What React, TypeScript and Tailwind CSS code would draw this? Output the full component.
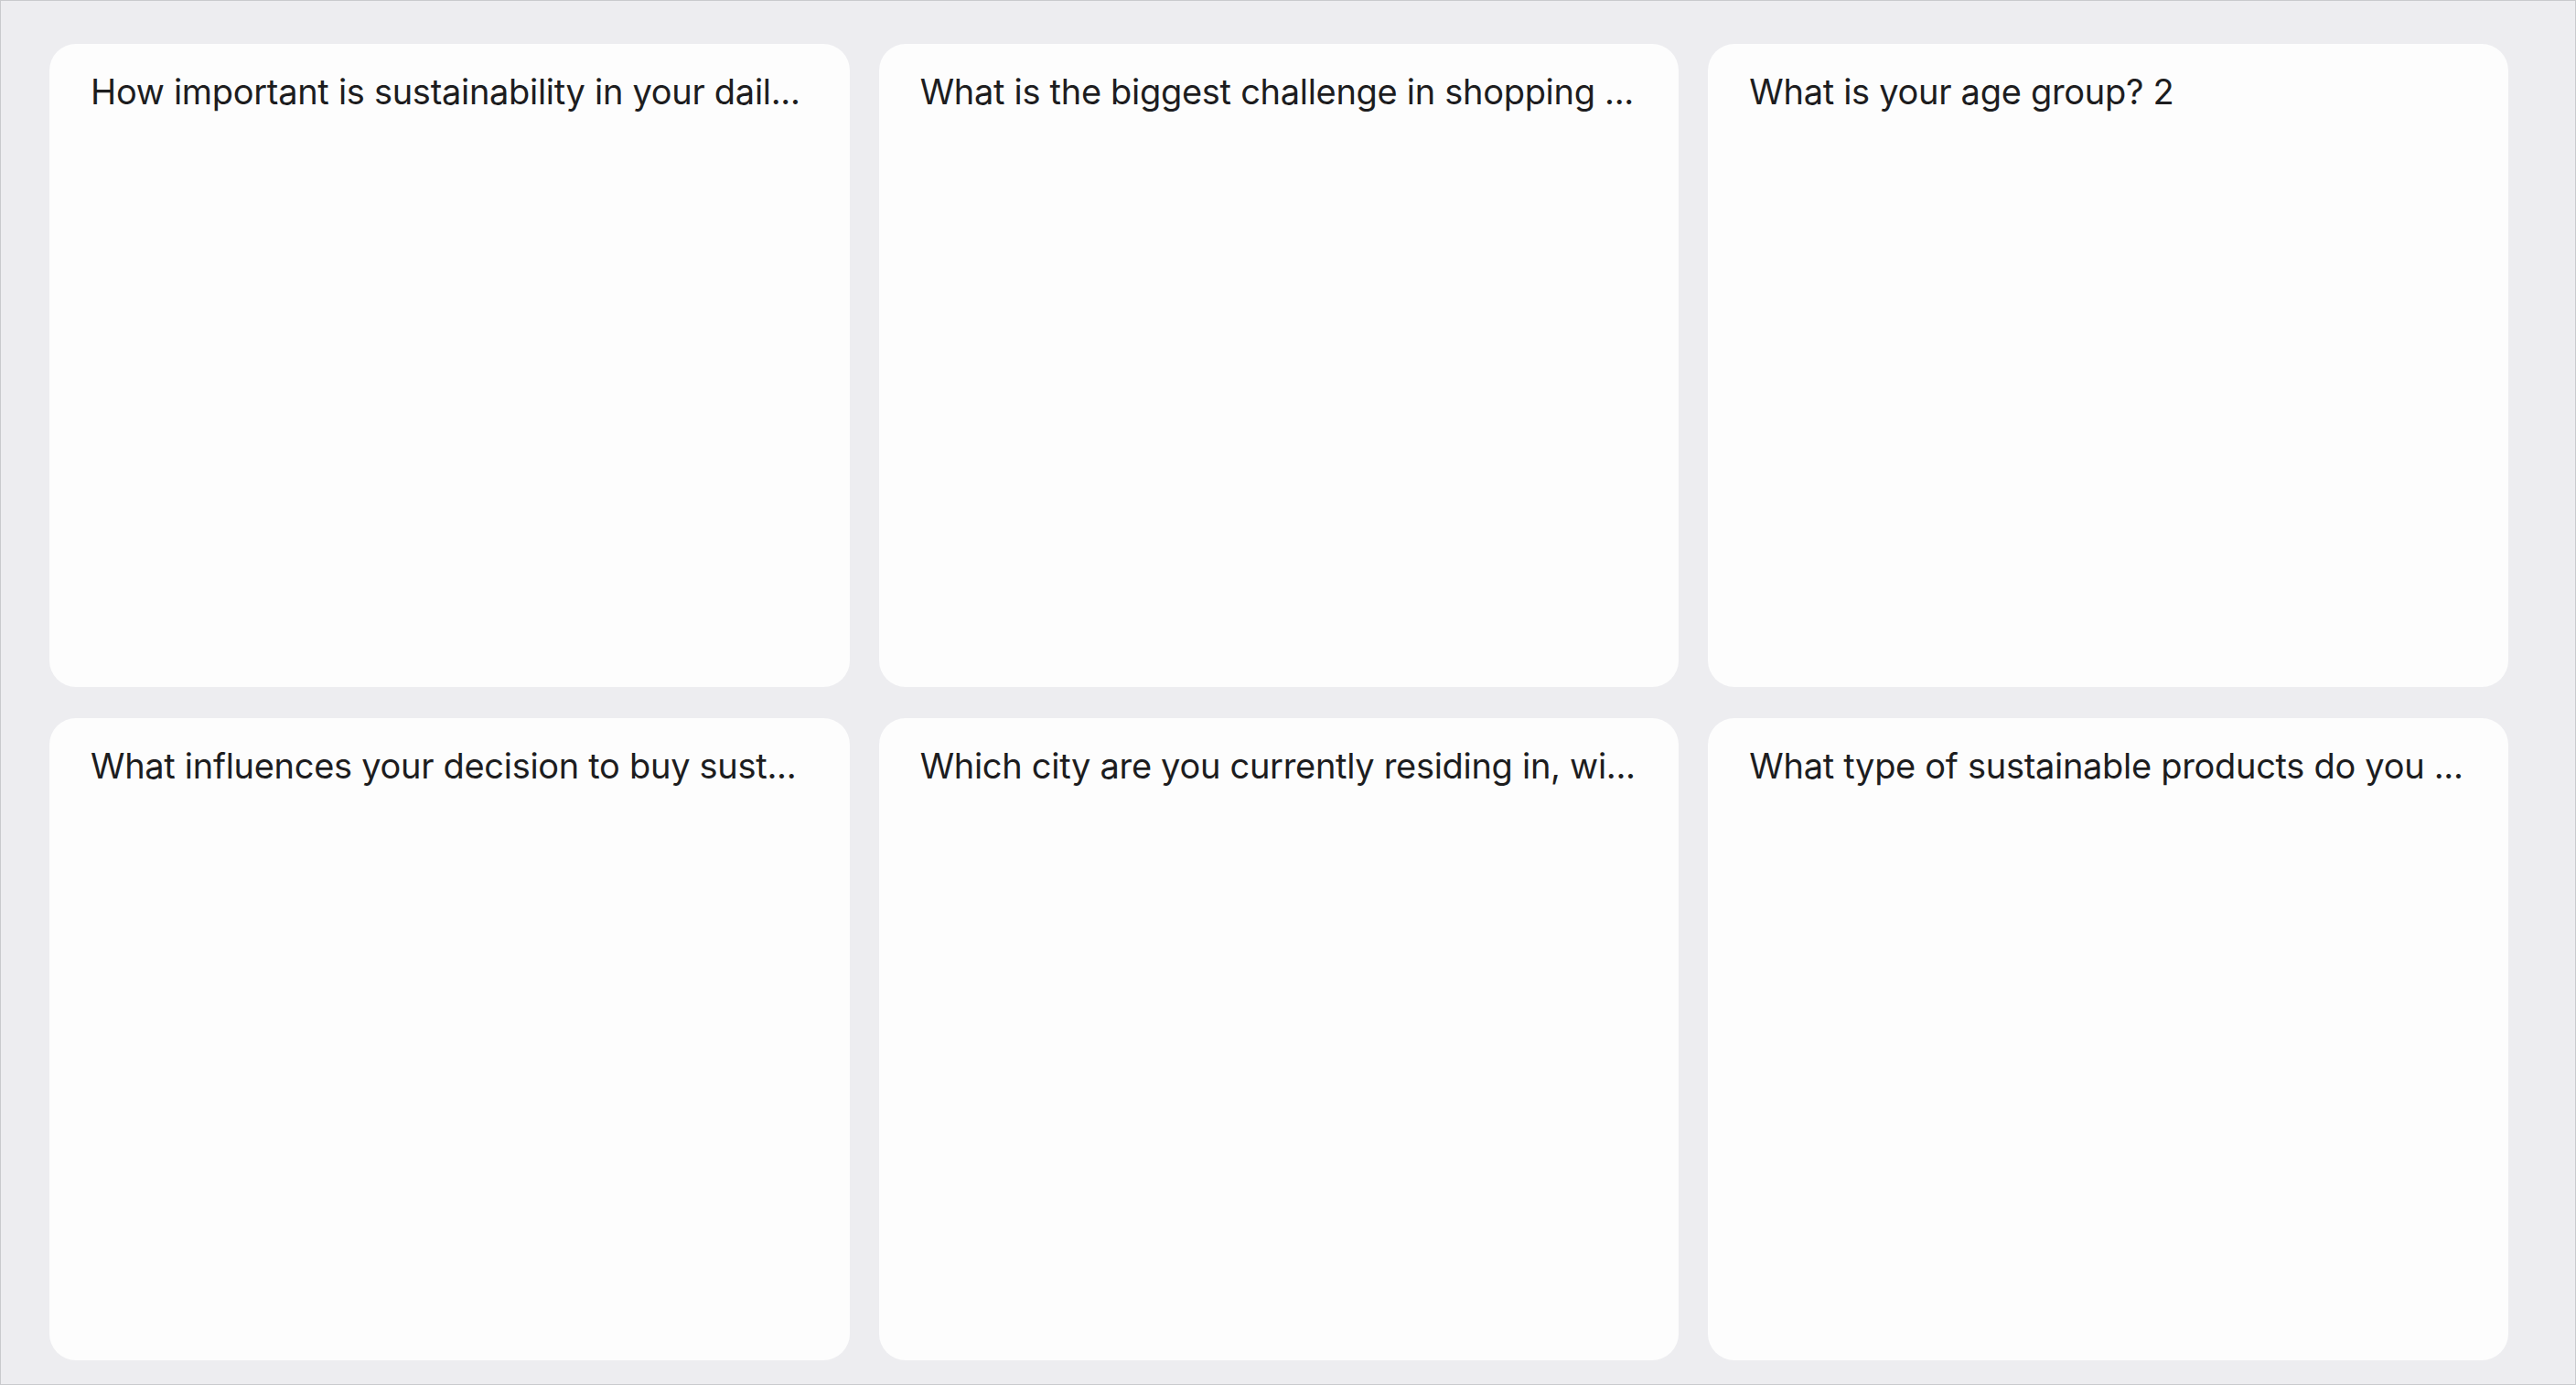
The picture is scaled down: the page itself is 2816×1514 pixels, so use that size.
import React from "react";

const titles = [
  "How important is sustainability in your dail...",
  "What is the biggest challenge in shopping ...",
  "What is your age group? 2",
  "What influences your decision to buy sust...",
  "Which city are you currently residing in, wi...",
  "What type of sustainable products do you ...",
];

export default function App() {
  return (
    <div className="h-[1514px] w-[2816px] overflow-hidden border border-[#c9cacd] bg-[#ededf0] pl-[53px] pr-[73px] pt-[47px] pb-[26px] font-['Inter','Liberation_Sans',sans-serif]">
      <div className="grid h-full grid-cols-3 grid-rows-2 gap-x-[32px] gap-y-[34px]">
        {titles.map((t) => (
          <div key={t} className="min-w-0 rounded-[29px] bg-[#fdfdfd] pl-[45px] pr-[40px] pt-[28px]">
            <div className="whitespace-nowrap text-[38px] leading-[48px] tracking-[-0.3px] text-[#1d1d1f]">
              {t}
            </div>
          </div>
        ))}
      </div>
    </div>
  );
}
